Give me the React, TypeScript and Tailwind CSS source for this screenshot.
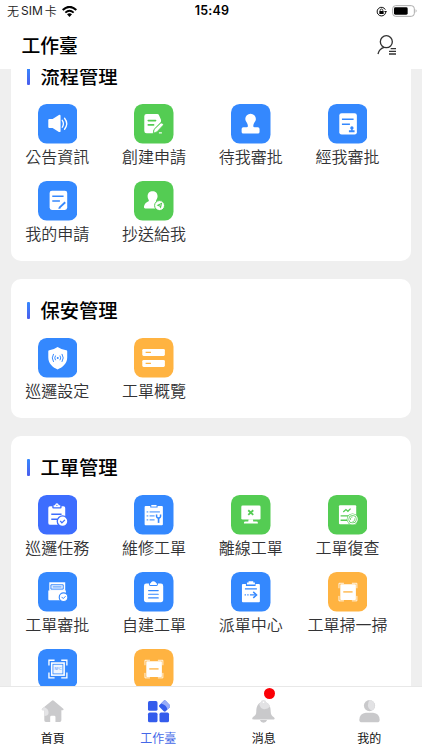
import React from 'react';

type IconProps = { c: string };
type Tile = { label: string; color: string; icon: (p: IconProps) => React.ReactElement };

const BLUE = '#3488fe';
const INDIGO = '#3d6dfe';
const GREEN = '#54cc53';
const ORANGE = '#ffb341';

// Every tile glyph is drawn on a 119-unit square that fills the tile.

const Speaker = () => (
  <>
    <path d="M34 45h10l19-12q5-2 5 3v45q0 5-5 3L44 72H34q-3 0-3-3V48q0-3 3-3z" fill="#fff" />
    <path d="M73 49q7 10 0 21M80 43q13 16 0 33" fill="none" stroke="#fff" strokeWidth="4" strokeLinecap="round" />
  </>
);

const DocPencil = ({ c }: IconProps) => (
  <>
    <path d="M38 30h32q4 0 5 3l6 14q1 3 0 7L62 74q-5 5-5 14H38q-7 0-7-7V37q0-7 7-7z" fill="#fff" />
    <path d="M43 50h22M43 63h16" stroke={c} strokeWidth="5" strokeLinecap="round" />
    <path d="M58 88l3-12 19-18q4-2 7 1t0 6L69 84z" fill="#fff" stroke={c} strokeWidth="2.500" strokeLinejoin="round" />
    <path d="M75 87h9" stroke="#fff" strokeWidth="3.500" />
  </>
);

const Stamp = () => (
  <path d="M59 29a16 16 0 0 1 16 16c0 8-8 12-8 21q0 4 4 4h10q5 0 5 5v9q0 5-5 5H37q-5 0-5-5v-9q0-5 5-5h10q4 0 4-4c0-9-8-13-8-21a16 16 0 0 1 16-16z" fill="#fff" />
);

const DocStamp = ({ c }: IconProps) => (
  <>
    <rect x="34" y="28" width="53" height="64" rx="7" fill="#fff" />
    <path d="M42 46h35M42 61h24" stroke={c} strokeWidth="4.500" />
    <path d="M72 67a5 5 0 0 1 5 5q0 3-3 5v2h6v6H63v-6h7v-2q-3-2-3-5a5 5 0 0 1 5-5z" fill={c} />
  </>
);

const DocPen = ({ c }: IconProps) => (
  <>
    <rect x="35" y="29" width="53" height="58" rx="7" fill="#fff" />
    <path d="M43 46h34M43 60h23" stroke={c} strokeWidth="4.500" />
    <path d="M64 81l18-17" stroke={c} strokeWidth="5.500" />
    <path d="M61 84l3-7 5 5z" fill={c} />
  </>
);

const UserSend = ({ c }: IconProps) => (
  <>
    <path d="M56 31c9 0 15 6 15 15 0 7-4 10-5 15 3 6 8 6 12 9v13H34q-5 0-4-6c1-9 8-14 15-17-1-5-4-7-4-14 0-9 6-15 15-15z" fill="#fff" />
    <circle cx="77" cy="74" r="15" fill="#fff" stroke={c} strokeWidth="3" />
    <path d="M68 73l17-8-4 18-5-6z" fill={c} />
    <path d="M76 77l5-7" stroke="#fff" strokeWidth="2" />
  </>
);

const Shield = ({ c }: IconProps) => (
  <>
    <path d="M59 27q14 9 26 10 3 0 3 3v19c0 19-15 30-29 36-14-6-28-17-28-36V40q0-3 3-3 12-1 25-10z" fill="#fff" />
    <circle cx="59.500" cy="60" r="3" fill={c} />
    <path d="M53 53q-5 7 0 14M66 53q5 7 0 14M47 48q-8 12 0 24M72 48q8 12 0 24" fill="none" stroke={c} strokeWidth="3" />
  </>
);

const Drawers = ({ c }: IconProps) => (
  <>
    <rect x="25" y="33" width="68" height="21" rx="4" fill="#fff" />
    <rect x="25" y="66" width="68" height="21" rx="4" fill="#fff" />
    <path d="M35 43.500h16M35 76.500h16" stroke={c} strokeWidth="3.500" />
  </>
);

const ClipCheck = ({ c }: IconProps) => (
  <>
    <path d="M36 34h7v4q0 3 3 3h22q3 0 3-3v-4h6q5 0 5 5v45q0 6-5 6H37q-6 0-6-6V39q0-5 5-5z" fill="#fff" />
    <path d="M47 31h4q2-6 6-6t6 6h4v6H47z" fill="#fff" />
    <circle cx="57" cy="31" r="2" fill={c} />
    <path d="M40 58h31M40 73h19" stroke={c} strokeWidth="5" />
    <circle cx="74" cy="79" r="16" fill="#fff" stroke={c} strokeWidth="4" />
    <path d="M67 78l5 6 9-9" fill="none" stroke={c} strokeWidth="4" />
  </>
);

const ClipWrench = ({ c }: IconProps) => (
  <>
    <path d="M35 33h14v5h22v-5h13q3 0 3 3v52q0 3-3 3H35q-3 0-3-3V36q0-3 3-3z" fill="#fff" />
    <path d="M52 30h16v5H52z" fill="#fff" />
    <path d="M38 51h5M47 51h31M38 63h5M47 63h15M38 75h5M47 75h15" stroke={c} strokeWidth="3" />
    <path d="M68 59v6q0 4 6 5 6-1 6-5v-6" fill="none" stroke={c} strokeWidth="4.500" />
    <path d="M74 68v16" stroke={c} strokeWidth="5" />
  </>
);

const MonitorX = ({ c }: IconProps) => (
  <>
    <rect x="31" y="32" width="58" height="42" rx="4" fill="#fff" />
    <path d="M53 73h13l1 7h10q4 0 4 3.500V86H39v-2.500q0-3.500 4-3.500h9z" fill="#fff" />
    <path d="M52 46l15 14M67 46L52 60" stroke={c} strokeWidth="5.500" />
  </>
);

const ReportCycle = ({ c }: IconProps) => (
  <>
    <path d="M36 31h46q3 0 3 3v54H36q-3 0-3-3V34q0-3 3-3z" fill="#fff" />
    <path d="M46 51l8-7 6 5 8-8M38 63h24M38 76h20" fill="none" stroke={c} strokeWidth="4" />
    <circle cx="74" cy="73" r="17.500" fill={c} />
    <circle cx="74" cy="73" r="14" fill={c} stroke="#fff" strokeWidth="3.500" />
    <circle cx="74" cy="73" r="10" fill="#fff" />
    <path d="M68 75a6.500 6.500 0 0 1 6-9M80 71a6.500 6.500 0 0 1-6 9" fill="none" stroke={c} strokeWidth="2.500" />
  </>
);

const TrayCheck = ({ c }: IconProps) => (
  <>
    <path d="M34 31h48v26H34z" fill="#fff" />
    <path d="M39 38.500h37v13H39zM44 45h27" fill="none" stroke={c} strokeWidth="3" />
    <path d="M31 56h53v29H34q-3 0-3-3z" fill="#fff" />
    <circle cx="77" cy="76" r="13" fill="#fff" stroke={c} strokeWidth="3.500" />
    <path d="M71 75l5 5 7-7" fill="none" stroke={c} strokeWidth="3" />
  </>
);

const ClipLines = ({ c }: IconProps) => (
  <>
    <path d="M37 35h8v3q0 4 4 4h19q4 0 4-4v-3h9q7 0 7 7v41q0 8-7 8H37q-7 0-7-8V42q0-7 7-7z" fill="#fff" />
    <path d="M48 35q2 0 4-4 2-3 6-3t7 3q2 4 4 4v4H48z" fill="#fff" />
    <path d="M44 56h29M44 67h29M44 78h29" stroke={c} strokeWidth="3.500" strokeLinecap="round" />
  </>
);

const ClipArrow = ({ c }: IconProps) => (
  <>
    <path d="M36 36h9v6h29v-6h10q3 0 3 3v49q0 3-3 3H36q-3 0-3-3V39q0-3 3-3z" fill="#fff" />
    <path d="M48 32h5v-4h14v4h5v6H48z" fill="#fff" />
    <path d="M42 51h36M41 69h4M49 69h4M57 69h18" stroke={c} strokeWidth="4" />
    <path d="M67 60l10 9-10 9" fill="none" stroke={c} strokeWidth="4.500" />
  </>
);

const Scan = ({ c }: IconProps) => (
  <>
    <path d="M33 49V34h15M72 34h15v15M87 72v15H72M48 87H33V72" fill="none" stroke="#fff" strokeOpacity=".85" strokeWidth="3" />
    <rect x="37" y="37" width="47" height="47" rx="2" fill="#fff" />
    <path d="M46 60h28" stroke={c} strokeWidth="4" />
  </>
);

const Nfc = ({ c }: IconProps) => (
  <>
    <path d="M33 50V34h17M70 34h17v16M87 71v16H70M50 87H33V71" fill="none" stroke="#fff" strokeWidth="4" />
    <rect x="39" y="40" width="42" height="41" fill="#fff" />
    <rect x="45" y="46" width="30" height="29" fill="#eef5ff" stroke={c} strokeWidth="2.500" />
    <text x="60" y="64" fontSize="10" textAnchor="middle" fill={c} fontFamily="Inter, sans-serif">NFC</text>
  </>
);

const sections: { title: string; tiles: Tile[] }[] = [
  {
    title: '流程管理',
    tiles: [
      { label: '公告資訊', color: BLUE, icon: Speaker },
      { label: '創建申請', color: GREEN, icon: DocPencil },
      { label: '待我審批', color: BLUE, icon: Stamp },
      { label: '經我審批', color: BLUE, icon: DocStamp },
      { label: '我的申請', color: BLUE, icon: DocPen },
      { label: '抄送給我', color: GREEN, icon: UserSend },
    ],
  },
  {
    title: '保安管理',
    tiles: [
      { label: '巡邏設定', color: BLUE, icon: Shield },
      { label: '工單概覽', color: ORANGE, icon: Drawers },
    ],
  },
  {
    title: '工單管理',
    tiles: [
      { label: '巡邏任務', color: INDIGO, icon: ClipCheck },
      { label: '維修工單', color: BLUE, icon: ClipWrench },
      { label: '離線工單', color: GREEN, icon: MonitorX },
      { label: '工單復查', color: GREEN, icon: ReportCycle },
      { label: '工單審批', color: BLUE, icon: TrayCheck },
      { label: '自建工單', color: BLUE, icon: ClipLines },
      { label: '派單中心', color: BLUE, icon: ClipArrow },
      { label: '工單掃一掃', color: ORANGE, icon: Scan },
      { label: '', color: BLUE, icon: Nfc },
      { label: '', color: ORANGE, icon: Scan },
    ],
  },
];

function AppTile({ label, color, icon: Icon }: Tile) {
  return (
    <div className="flex h-[77px] flex-col items-center">
      <svg viewBox="0 0 119 119" className="h-[39.5px] w-[39.5px] shrink-0">
        <rect width="119" height="119" rx="26" fill={color} />
        <Icon c={color} />
      </svg>
      <span className="text-[16px] leading-6 font-[350] whitespace-nowrap text-[#333335]">{label}</span>
    </div>
  );
}

function StatusBar() {
  return (
    <div className="grid h-[22px] grid-cols-3 items-center pr-[5px] pl-[7px] text-black">
      <div className="flex items-center text-[12px] leading-5 font-[350] text-[#222]">
        <span>无</span>
        <span className="ml-[2px] font-[Inter] text-[12px] font-normal">SIM</span>
        <span className="ml-[2px]">卡</span>
        <svg viewBox="0 0 45 33" className="ml-[5px] h-[11px] w-[15px]">
          <path d="M2 12Q22.500-7 43 12" fill="none" stroke="#000" strokeWidth="6" />
          <path d="M10 20q12.500-12 25 0" fill="none" stroke="#000" strokeWidth="5.500" />
          <path d="M15 25q7.500-6 15 0l-7.500 8z" />
        </svg>
      </div>
      <div className="text-center font-[Inter] text-[12.5px] font-semibold tracking-[0.2px]">15:49</div>
      <div className="flex items-center justify-end">
        <svg viewBox="0 0 33 33" className="mr-[5px] h-[11px] w-[11px]">
          <path d="M28 11a13 13 0 1 0 1 9" fill="none" stroke="#111" strokeWidth="3" />
          <path d="M24 15h9l-4 7z" fill="#111" />
          <rect x="10" y="15" width="13" height="9" rx="1" />
          <path d="M12.500 16v-3a4 4 0 0 1 8 0v3" fill="none" stroke="#111" strokeWidth="2.500" />
        </svg>
        <svg viewBox="0 0 75 36" className="h-[12px] w-[25px]">
          <rect x="2" y="2" width="65" height="32" rx="9" fill="none" stroke="#aaa" strokeWidth="3" />
          <rect x="6" y="7" width="41" height="22" rx="4" />
          <path d="M71 13q5 5 0 10z" fill="#999" />
        </svg>
      </div>
    </div>
  );
}

const navItems = [
  {
    label: '首頁',
    active: false,
    icon: (
      <>
        <path d="M33 2q3-2 6 0l28 24q4 4-1 5h-4v31q0 5-5 5H44V52q0-4-4-4h-8q-4 0-4 4v15H15q-5 0-5-5V31H5q-5-1-1-5z" fill="#cacacc" />
        <path d="M10 21q14 6 13 19-1 7-13 9V31H5q-4-1-1-5z" fill="#e4e4e6" />
      </>
    ),
  },
  {
    label: '工作臺',
    active: true,
    icon: (
      <>
        <rect x="3" y="3" width="29" height="30" rx="5" fill="#345cec" />
        <rect x="3" y="38" width="29" height="30" rx="5" fill="#345cec" />
        <rect x="38" y="38" width="29" height="30" rx="5" fill="#345cec" />
        <path d="M51 2q3-3 6 0l13 14q2 3 0 5L57 34q-3 3-6 0L38 21q-3-3 0-6z" fill="#345cec" />
        <path d="M51 2q3-3 6 0l13 14q2 3 0 5l-8 8q-2-13-19-18z" fill="#99adf8" />
      </>
    ),
  },
  {
    label: '消息',
    active: false,
    icon: (
      <>
        <path d="M35 6c17 0 22 14 22 30 0 14 11 15 12 20 0 3-2 3-4 3H5c-3 0-5-1-4-4 2-5 12-5 12-19C13 20 18 6 35 6z" fill="#c9c9cb" />
        <path d="M24 61h22q-3 8-11 8t-11-8z" fill="#c9c9cb" />
        <path d="M27 7q0-7 8-7t8 7q10 4 12 13-6 8-18 8-11 0-15-15 2-4 5-6z" fill="#e2e2e4" />
        <circle cx="35" cy="7" r="2.500" fill="#fff" />
      </>
    ),
  },
  {
    label: '我的',
    active: false,
    icon: (
      <>
        <circle cx="35" cy="17" r="17" fill="#c9c9cb" />
        <path d="M35 0a17 17 0 0 1 7 32q-11-4-12-15Q30 6 35 0z" fill="#e2e2e4" />
        <path d="M24 39h22q19 2 20 21 0 8-8 8H12q-8 0-8-8 1-19 20-21z" fill="#c9c9cb" />
      </>
    ),
  },
];

export default function App() {
  return (
    <div className="flex h-[750px] w-[422px] flex-col overflow-hidden bg-[#efefef] font-['Noto_Sans_CJK_TC','Noto_Sans_CJK_SC',sans-serif]">
      <header className="h-[69px] shrink-0 bg-white">
        <StatusBar />
        <div className="flex h-[46px] items-center justify-between pr-[25px] pl-[21.5px]">
          <h1 className="text-[18.8px] font-medium text-black">工作臺</h1>
          <svg viewBox="0 0 60 60" className="h-[20px] w-[20px]" fill="none" stroke="#333" strokeWidth="4">
            <circle cx="28" cy="20" r="18" />
            <path d="M3 57q3-15 18-20M41 41h16M36 49h21M36 57h21" />
          </svg>
        </div>
      </header>

      <main className="min-h-0 flex-1 overflow-hidden">
        <div className="-mt-[24px] flex flex-col gap-[18px] pr-[11px] pl-[10.5px]">
          {sections.map((s) => (
            <section key={s.title} className="rounded-[10px] bg-white pb-[3px]">
              <div className="flex h-[59px] items-center pt-[3px] pl-[16.5px]">
                <span className="h-[17px] w-[3px] rounded-[1px] bg-linear-to-b from-[#3488fe] to-[#4a5cec]" />
                <h2 className="-mt-[1px] ml-[10.5px] text-[19.3px] leading-7 font-medium text-black">{s.title}</h2>
              </div>
              <div className="-ml-[1.5px] grid w-[387px] grid-cols-4">
                {s.tiles.map((t, i) => (
                  <AppTile key={i} {...t} />
                ))}
              </div>
            </section>
          ))}
        </div>
      </main>

      <nav className="grid h-[64px] shrink-0 grid-cols-4 border-t border-[#e8e8e8] bg-white">
        {navItems.map((n) => (
          <div key={n.label} className="flex flex-col items-center pt-[13px]">
            <div className="relative h-[23px] w-[23px]">
              <svg viewBox="0 0 70 70" className="h-full w-full">
                {n.icon}
              </svg>
              {n.label === '消息' && (
                <span className="absolute -top-[12px] left-[12px] h-[11px] w-[11px] rounded-full bg-[#fb0006]" />
              )}
            </div>
            <span className={n.active ? 'mt-[5px] text-[12px] leading-5 text-[#4468e8]' : 'mt-[5px] text-[12px] leading-5 text-[#111]'}>
              {n.label}
            </span>
          </div>
        ))}
      </nav>
    </div>
  );
}
